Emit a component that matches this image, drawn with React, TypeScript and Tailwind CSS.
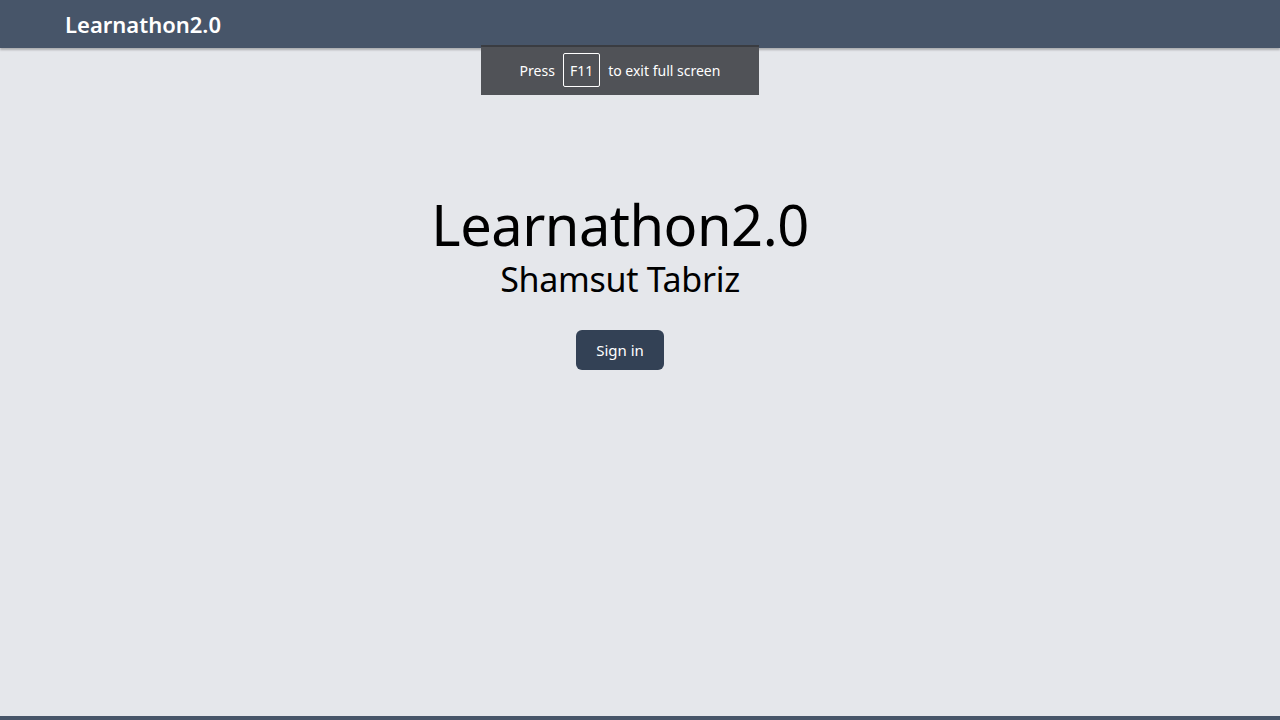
export default function App() {
  return (
    <div
      className="relative flex min-h-[720px] flex-col bg-[#e5e7eb] text-black"
      style={{ fontFamily: '"Noto Sans", "Open Sans", sans-serif' }}
    >
      <header className="flex h-12 items-center bg-[#475569] px-[65px] shadow-[0_2px_2px_rgba(0,0,0,0.25)]">
        <span className="text-[22px] font-semibold text-white">Learnathon2.0</span>
      </header>

      {/* browser fullscreen hint */}
      <div className="absolute left-[481px] top-[45px] flex h-[50px] w-[278px] items-center justify-center gap-2 border-t-2 border-[#3a3c41] bg-[#505257] pb-[2px] text-[14px] text-white">
        <span>Press</span>
        <span className="flex h-[34px] items-center rounded-[2px] border border-white px-[6px]">F11</span>
        <span>to exit full screen</span>
      </div>

      <main className="flex flex-1 flex-col items-center pr-10 pt-[145px]">
        <h1 className="text-[56px] leading-[62px] font-normal tracking-[-0.5px]">Learnathon2.0</h1>
        <h2 className="mt-1 text-[34px] leading-10 tracking-[-0.3px]">Shamsut Tabriz</h2>
        <button className="mt-[31px] flex h-10 w-[88px] items-center justify-center rounded-md bg-[#334155] text-[15px] text-white">
          Sign in
        </button>
      </main>

      <footer className="h-1 bg-[#475569]" />
    </div>
  );
}
